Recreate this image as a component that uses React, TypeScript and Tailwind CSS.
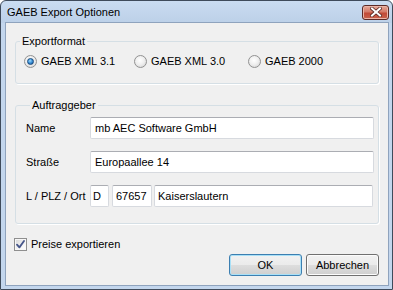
import { ReactNode } from 'react';
import clsx from 'clsx';

const font = "font-['Liberation_Sans',Arial,sans-serif]";

/** Vista-artiger Radiobutton */
function Radio({ checked, label, className }: { checked?: boolean; label: string; className?: string }) {
  return (
    <label className={clsx('flex items-center h-[13px]', className)}>
      <span className="w-[13px] h-[13px] shrink-0 rounded-full border border-[#929292] bg-[radial-gradient(circle_at_45%_40%,#ffffff_0%,#f0f0f0_45%,#cfcfcf_100%)] flex items-center justify-center">
        {checked && (
          <span className="w-[7px] h-[7px] rounded-full border border-[#174a7f] bg-[radial-gradient(circle_at_40%_35%,#9ddcff_0%,#3b8fd6_50%,#144f8c_100%)]" />
        )}
      </span>
      <span className="ml-[4px] leading-[13px]">{label}</span>
    </label>
  );
}

function Checkbox({ checked, label }: { checked?: boolean; label: string }) {
  return (
    <label className="flex items-center h-[13px]">
      <span className="w-[13px] h-[13px] shrink-0 border border-[#8f8f8f] bg-[linear-gradient(135deg,#d6d6d6_0%,#f4f4f4_60%,#ffffff_100%)] shadow-[inset_0_0_0_1px_#f7f7f7] flex items-center justify-center">
        {checked && (
          <svg width="9" height="9" viewBox="0 0 9 9">
            <path d="M1 4.6 L3.4 7.4 L8 1" fill="none" stroke="#46568a" strokeWidth="1.8" strokeLinecap="round" strokeLinejoin="round" />
          </svg>
        )}
      </span>
      <span className="ml-[4px] leading-[13px]">{label}</span>
    </label>
  );
}

function Field({ value, className, textPad = 'pl-[4px]' }: { value: string; className?: string; textPad?: string }) {
  return (
    <input
      readOnly
      value={value}
      className={clsx(
        'h-[22px] bg-white border border-[#d7dadf] border-t-[#abadb3] rounded-[2px] text-[11px] text-black outline-none min-w-0',
        textPad,
        className
      )}
    />
  );
}

function Group({ title, children, className }: { title: string; children: ReactNode; className?: string }) {
  return (
    <fieldset className={clsx('border border-[#d5dfe5] rounded-[3px] shadow-[1px_1px_0_#ffffff]', className)}>
      <legend className="ml-[4px] px-[2px] leading-[13px]">{title}</legend>
      {children}
    </fieldset>
  );
}

function Button({ children, isDefault }: { children: ReactNode; isDefault?: boolean }) {
  return (
    <button
      className={clsx(
        'w-[73px] h-[22px] rounded-[3px] border leading-[13px] text-black',
        'bg-[linear-gradient(to_bottom,#f2f2f2_0%,#ebebeb_50%,#dddddd_51%,#cfcfcf_100%)]',
        isDefault
          ? 'border-[#3c7fb1] shadow-[inset_0_0_0_1px_#a9e0f7]'
          : 'border-[#707070] shadow-[inset_0_0_0_1px_#fcfcfc]'
      )}
    >
      {children}
    </button>
  );
}

export default function App() {
  return (
    <div className={clsx('w-[393px] h-[290px] flex flex-col text-[11px] text-black', font)}>
      <div className="flex-1 flex flex-col border border-[#3f4b5b] rounded-t-[6px] bg-[linear-gradient(to_bottom,#cadcf1_0px,#bcd0e8_22px,#c3d6ed_22px,#c3d6ed_100%)] overflow-hidden">
        {/* Titelleiste */}
        <div className="h-[21px] flex items-center justify-between pl-[6px] pr-[3px]">
          <span className="leading-[13px] mt-[1px]">GAEB Export Optionen</span>
          <div className="w-[27px] h-[15px] mt-[1px] rounded-[3px] border border-[#5c2a26] bg-[linear-gradient(to_bottom,#e7a998_0%,#d47a68_45%,#c24a37_55%,#c9624c_100%)] shadow-[inset_0_0_0_1px_#eab4a6] flex items-center justify-center">
            <svg width="12" height="10" viewBox="0 0 12 10">
              <path d="M2 1.5 L10 8.5 M10 1.5 L2 8.5" stroke="#5a2a25" strokeWidth="3.6" strokeLinecap="square" />
              <path d="M2 1.5 L10 8.5 M10 1.5 L2 8.5" stroke="#ffffff" strokeWidth="2" strokeLinecap="square" />
            </svg>
          </div>
        </div>

        {/* Inhalt */}
        <div className="flex-1 flex flex-col ml-[4px] mr-[3px] mb-[3px] bg-[#f0f0f0] border border-[#8fa3bd] px-[9px] pt-[12px]">
          <Group title="Exportformat" className="pb-[15px]">
            <div className="flex mt-[7px] pl-[8px]">
              <Radio checked label="GAEB XML 3.1" className="w-[110px]" />
              <Radio label="GAEB XML 3.0" className="w-[114px]" />
              <Radio label="GAEB 2000" />
            </div>
          </Group>

          <Group title="Auftraggeber" className="mt-[15px] pb-[16px] pl-[10px] pr-[4px]">
            <div className="flex flex-col gap-[12px] mt-[5px]">
              <div className="flex items-center">
                <span className="w-[64px]">Name</span>
                <Field value="mb AEC Software GmbH" className="flex-1" />
              </div>
              <div className="flex items-center">
                <span className="w-[64px]">Straße</span>
                <Field value="Europaallee 14" className="flex-1" />
              </div>
              <div className="flex items-center">
                <span className="w-[64px]">L / PLZ / Ort</span>
                <Field value="D" className="w-[19px]" textPad="pl-[2px]" />
                <Field value="67657" className="w-[40px] ml-[3px]" textPad="pl-[3px]" />
                <Field value="Kaiserslautern" className="flex-1 ml-[2px] mr-[1px]" textPad="pl-[3px]" />
              </div>
            </div>
          </Group>

          <div className="mt-[14px] ml-[-1px]">
            <Checkbox checked label="Preise exportieren" />
          </div>

          <div className="flex justify-end gap-[4px] mt-[3px]">
            <Button isDefault>OK</Button>
            <Button>Abbrechen</Button>
          </div>
        </div>
      </div>
    </div>
  );
}
